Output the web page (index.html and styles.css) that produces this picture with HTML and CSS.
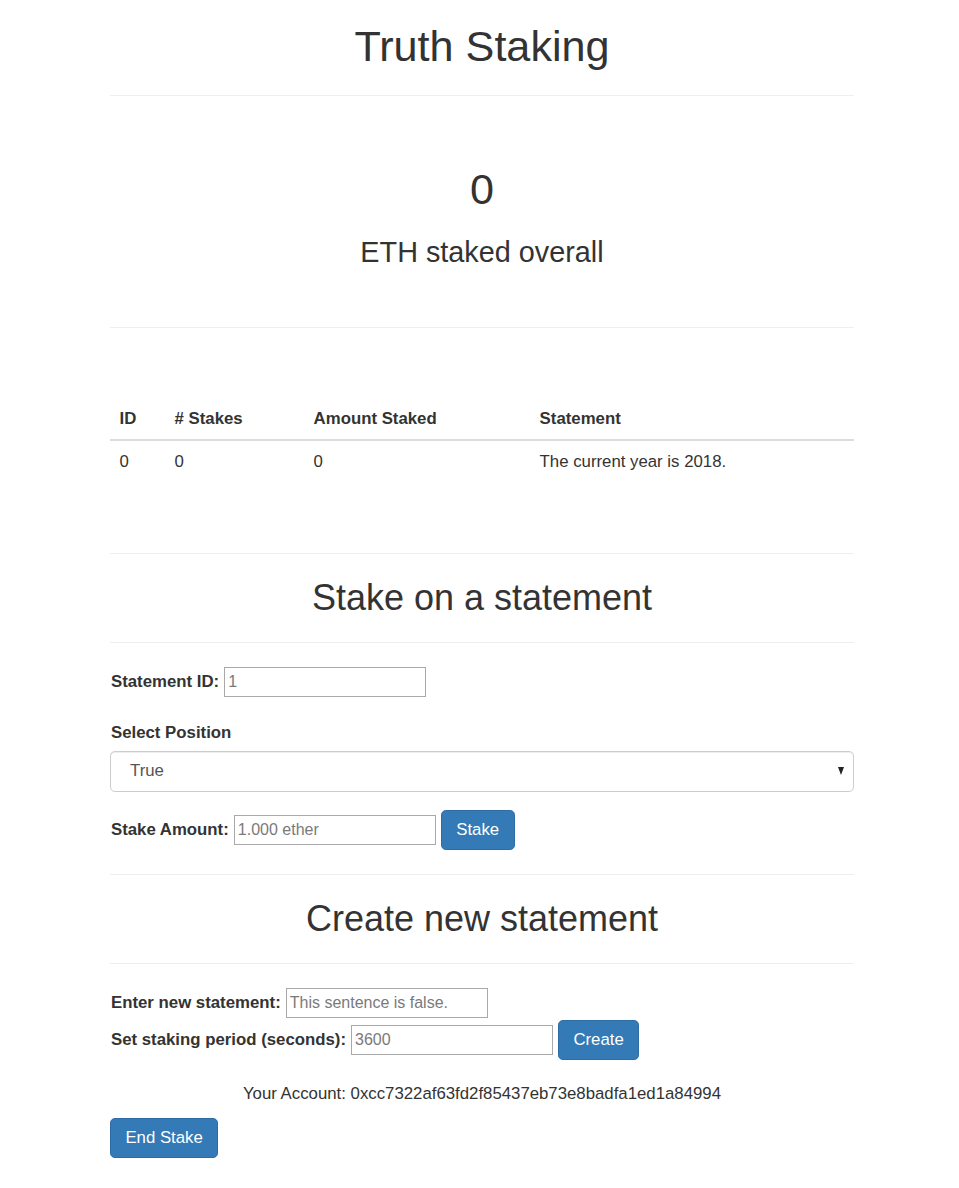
FILE: index.html
```html
<!DOCTYPE html>
<html lang="en">
<head>
<meta charset="utf-8">
<title>Truth Staking</title>
<link rel="stylesheet" href="styles.css">
</head>
<body>
<div class="container">
  <h1 class="page-title">Truth Staking</h1>
  <hr>

  <section class="total">
    <h1 class="total-value">0</h1>
    <h3 class="total-label">ETH staked overall</h3>
  </section>

  <hr>

  <section class="statements">
    <table class="table">
      <thead>
        <tr>
          <th class="col-id">ID</th>
          <th class="col-stakes"># Stakes</th>
          <th class="col-amount">Amount Staked</th>
          <th>Statement</th>
        </tr>
      </thead>
      <tbody>
        <tr>
          <td>0</td>
          <td>0</td>
          <td>0</td>
          <td>The current year is 2018.</td>
        </tr>
      </tbody>
    </table>
  </section>

  <hr>
  <h2 class="section-title">Stake on a statement</h2>
  <hr>

  <form class="stake-form">
    <div class="field-row field-row-spaced">
      <label for="statement-id">Statement ID:</label>
      <input id="statement-id" class="text-input" type="text" placeholder="1">
    </div>
    <div class="form-group">
      <label class="block-label" for="position">Select Position</label>
      <div class="select-wrap">
        <select id="position" class="form-control">
          <option>True</option>
          <option>False</option>
        </select>
      </div>
    </div>
    <div class="field-row">
      <label for="stake-amount">Stake Amount:</label>
      <input id="stake-amount" class="text-input" type="text" placeholder="1.000 ether">
      <button type="button" class="btn btn-primary">Stake</button>
    </div>
  </form>

  <hr>
  <h2 class="section-title">Create new statement</h2>
  <hr>

  <form class="create-form">
    <div class="field-row">
      <label for="new-statement">Enter new statement:</label>
      <input id="new-statement" class="text-input" type="text" placeholder="This sentence is false.">
    </div>
    <div class="field-row field-row-tight">
      <label for="period">Set staking period (seconds):</label>
      <input id="period" class="text-input" type="text" placeholder="3600">
      <button type="button" class="btn btn-primary">Create</button>
    </div>
  </form>

  <p class="account">Your Account: 0xcc7322af63fd2f85437eb73e8badfa1ed1a84994</p>

  <button type="button" class="btn btn-primary">End Stake</button>
</div>
</body>
</html>
```

FILE: styles.css
```css
* {
  box-sizing: border-box;
}

html, body {
  margin: 0;
  padding: 0;
  background: #fff;
}

body {
  font-family: "Liberation Sans", Arial, sans-serif;
  font-size: 16.8px;
  line-height: 24px;
  color: #333;
}

.container {
  width: 744px;
  margin-left: 110px;
  padding-bottom: 30px;
}

h1, h2, h3 {
  font-weight: 400;
  line-height: 1.1;
  text-align: center;
  color: #333;
}

.page-title {
  font-size: 43.2px;
  margin: 23px 0 12px;
}

hr {
  height: 0;
  margin: 24px 0;
  border: 0;
  border-top: 1px solid #eee;
}

.total {
  padding: 22px 0;
}

.total-value {
  font-size: 43.2px;
  margin: 24px 0 12px;
}

.total-label {
  font-size: 28.8px;
  margin: 24px 0 12px;
}

.statements {
  padding: 44px 0 21px;
}

.table {
  width: 100%;
  border-collapse: collapse;
  border-spacing: 0;
  table-layout: fixed;
  margin-bottom: 24px;
}

.table th,
.table td {
  padding: 9.6px;
  line-height: 24px;
  text-align: left;
  vertical-align: top;
}

.table th {
  padding-top: 11.6px;
  padding-bottom: 7.6px;
  font-weight: 700;
  vertical-align: bottom;
  border-bottom: 2px solid #ddd;
}

.table td {
  border-top: 1px solid #ddd;
}

.col-id {
  width: 55px;
}

.col-stakes {
  width: 139px;
}

.col-amount {
  width: 226px;
}

.section-title {
  font-size: 36px;
  margin: 24px 0 12px;
}

.stake-form,
.create-form {
  margin: 0;
}

.field-row {
  display: flex;
  align-items: center;
  gap: 5px;
}

.field-row-spaced {
  margin-bottom: 24px;
}

.field-row-tight {
  margin-top: 2px;
}

label {
  font-weight: 700;
  line-height: 24px;
  margin: 0 0 0 1px;
}

.block-label {
  display: block;
  margin-bottom: 6px;
}

.form-group {
  margin-bottom: 18px;
}

.text-input {
  width: 202px;
  height: 30px;
  margin: 0;
  padding: 0 3px;
  border: 1px solid #a9a9a9;
  border-radius: 0;
  background: #fff;
  font-family: "Liberation Sans", Arial, sans-serif;
  font-size: 16px;
  color: #333;
}

.text-input::placeholder {
  color: #7a7a7a;
  opacity: 1;
}

.select-wrap {
  position: relative;
}

.select-wrap::after {
  content: "";
  position: absolute;
  right: 10px;
  top: 16px;
  border-left: 3.5px solid transparent;
  border-right: 3.5px solid transparent;
  border-top: 8px solid #222;
  pointer-events: none;
}

.form-control {
  display: block;
  width: 100%;
  height: 41px;
  margin: 0;
  padding: 7.2px 14.4px 7.2px 19px;
  font-family: "Liberation Sans", Arial, sans-serif;
  font-size: 16.8px;
  line-height: 24px;
  color: #555;
  background: #fff;
  border: 1px solid #ccc;
  border-radius: 4.8px;
  box-shadow: inset 0 1px 1px rgba(0, 0, 0, 0.075);
  -webkit-appearance: none;
  appearance: none;
}

.btn {
  display: inline-block;
  margin: 0;
  padding: 7.2px 14.4px;
  font-family: "Liberation Sans", Arial, sans-serif;
  font-size: 16.8px;
  font-weight: 400;
  line-height: 24px;
  text-align: center;
  white-space: nowrap;
  border: 1px solid transparent;
  border-radius: 4.8px;
  cursor: pointer;
}

.btn-primary {
  color: #fff;
  background-color: #337ab7;
  border-color: #2e6da4;
}

.account {
  margin: 22px 0 12px;
  text-align: center;
}
```
